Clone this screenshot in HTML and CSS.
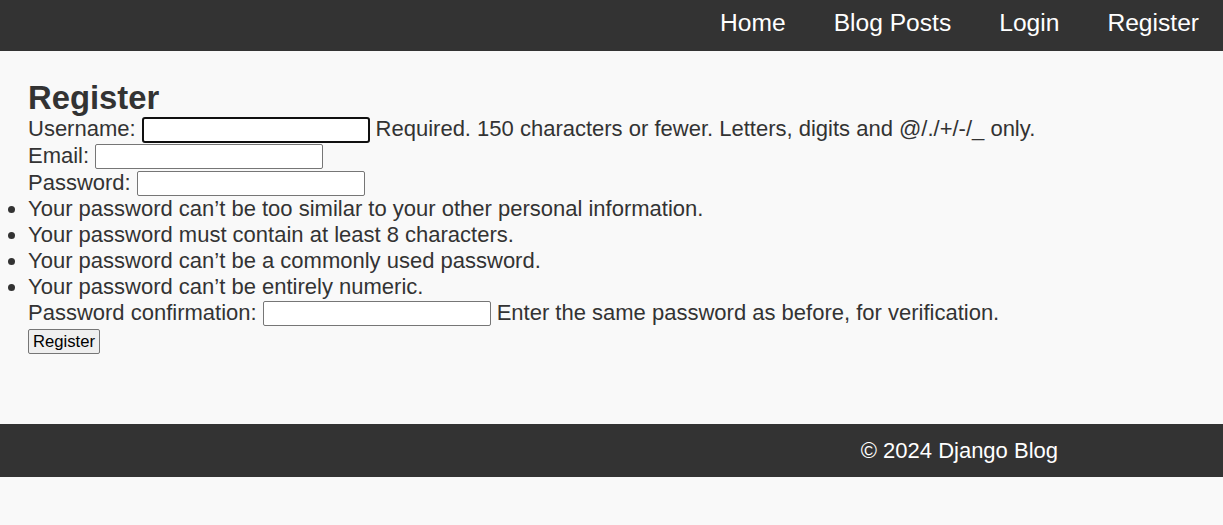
FILE: index.html
```html
<!DOCTYPE html>
<html lang="en">
<head>
<meta charset="utf-8">
<title>Register</title>
<link rel="stylesheet" href="styles.css">
</head>
<body>
<header class="site-header">
  <nav class="nav">
    <a class="nav-link" href="#">Home</a>
    <a class="nav-link" href="#">Blog Posts</a>
    <a class="nav-link" href="#">Login</a>
    <a class="nav-link" href="#">Register</a>
  </nav>
</header>
<main class="content">
  <h1 class="title">Register</h1>
  <form class="form">
    <p class="row"><label class="label">Username:</label><input class="field is-focused" type="text"><span class="help">Required. 150 characters or fewer. Letters, digits and @/./+/-/_ only.</span></p>
    <p class="row"><label class="label">Email:</label><input class="field" type="email"></p>
    <p class="row row-short"><label class="label">Password:</label><input class="field" type="password"></p>
    <ul class="rules">
      <li>Your password can’t be too similar to your other personal information.</li>
      <li>Your password must contain at least 8 characters.</li>
      <li>Your password can’t be a commonly used password.</li>
      <li>Your password can’t be entirely numeric.</li>
    </ul>
    <p class="row"><label class="label">Password confirmation:</label><input class="field" type="password"><span class="help">Enter the same password as before, for verification.</span></p>
    <button class="btn" type="button">Register</button>
  </form>
</main>
<footer class="site-footer">
  <p class="copy">© 2024 Django Blog</p>
</footer>
</body>
</html>
```
FILE: styles.css
```css
html, body {
  margin: 0;
  padding: 0;
}
body {
  background: #f9f9f9;
  color: #333333;
  font-family: "Liberation Sans", Arial, sans-serif;
  font-size: 22px;
}
.site-header {
  background: #333333;
  box-sizing: border-box;
  height: 51px;
  padding-top: 9px;
  display: flex;
  align-items: flex-start;
  justify-content: flex-end;
}
.nav {
  display: flex;
  padding-right: 24px;
  gap: 48px;
}
.nav-link {
  color: #ffffff;
  text-decoration: none;
  font-size: 24.6px;
  line-height: normal;
}
.content {
  box-sizing: border-box;
  min-height: 373px;
  padding: 28px 28px 0;
}
.title {
  margin: 0;
  font-size: 32.8px;
  font-weight: bold;
  line-height: 37px;
  color: #333333;
}
.form {
  margin: 0;
}
.row {
  margin: 0;
  height: 27px;
  display: flex;
  align-items: flex-start;
  gap: 6px;
  line-height: normal;
  white-space: nowrap;
}
.row-short {
  height: 26px;
}
.field {
  box-sizing: border-box;
  width: 228px;
  height: 25px;
  margin: 1px 0 0;
  border: 1px solid #767676;
  border-radius: 2px;
  background: #ffffff;
  padding: 1px 2px;
  font-family: "Liberation Sans", Arial, sans-serif;
  font-size: 16.67px;
}
.field.is-focused {
  border: 2px solid #101010;
  border-radius: 3px;
  height: 26px;
  outline: none;
}
.rules {
  margin: 0;
  padding: 0;
  line-height: 26px;
}
.btn {
  display: block;
  margin-top: 2px;
  height: 25px;
  padding: 1px 4px;
  border: 1px solid #767676;
  border-radius: 2px;
  background: #efefef;
  color: #000000;
  font-family: "Liberation Sans", Arial, sans-serif;
  font-size: 16.67px;
}
.site-footer {
  background: #333333;
  height: 53px;
  display: flex;
  align-items: center;
  justify-content: flex-end;
  padding-right: 165px;
}
.copy {
  margin: 0;
  color: #ffffff;
  font-size: 22px;
  line-height: normal;
}
```
